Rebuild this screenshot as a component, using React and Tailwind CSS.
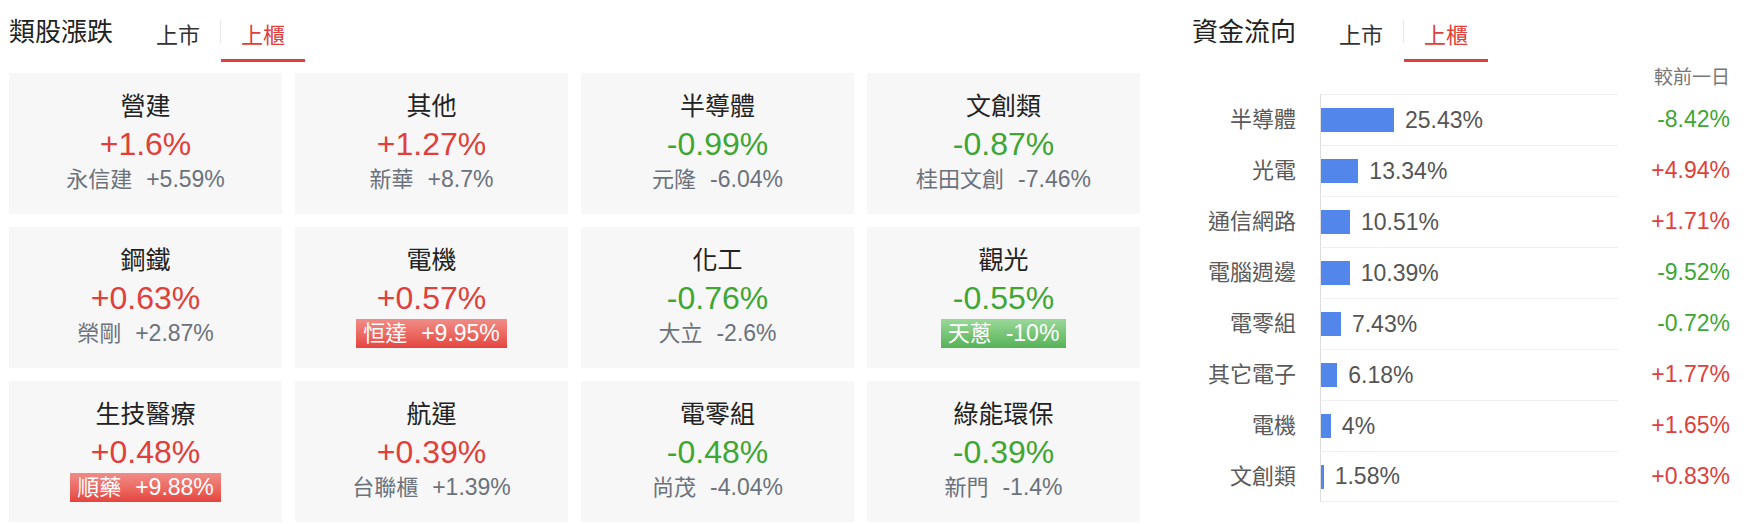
import React from "react";

const sectors = [
  { name: "營建", change: 1.6, top: "永信建", topChange: 5.59 },
  { name: "其他", change: 1.27, top: "新華", topChange: 8.7 },
  { name: "半導體", change: -0.99, top: "元隆", topChange: -6.04 },
  { name: "文創類", change: -0.87, top: "桂田文創", topChange: -7.46 },
  { name: "鋼鐵", change: 0.63, top: "榮剛", topChange: 2.87 },
  { name: "電機", change: 0.57, top: "恒達", topChange: 9.95, limit: true },
  { name: "化工", change: -0.76, top: "大立", topChange: -2.6 },
  { name: "觀光", change: -0.55, top: "天蔥", topChange: -10, limit: true },
  { name: "生技醫療", change: 0.48, top: "順藥", topChange: 9.88, limit: true },
  { name: "航運", change: 0.39, top: "台聯櫃", topChange: 1.39 },
  { name: "電零組", change: -0.48, top: "尚茂", topChange: -4.04 },
  { name: "綠能環保", change: -0.39, top: "新門", topChange: -1.4 },
];

const flows = [
  { name: "半導體", share: 25.43, diff: -8.42 },
  { name: "光電", share: 13.34, diff: 4.94 },
  { name: "通信網路", share: 10.51, diff: 1.71 },
  { name: "電腦週邊", share: 10.39, diff: -9.52 },
  { name: "電零組", share: 7.43, diff: -0.72 },
  { name: "其它電子", share: 6.18, diff: 1.77 },
  { name: "電機", share: 4, diff: 1.65 },
  { name: "文創類", share: 1.58, diff: 0.83 },
];

function signed(value) {
  return value > 0 ? `+${value}%` : `${value}%`;
}

function Tabs({ title }) {
  return (
    <div className="flex h-[62px]">
      <h2 className="pt-[14px] text-[26px] leading-[36px] text-[#222]">
        {title}
      </h2>
      <div className="ml-[23px] flex">
        <button className="h-[62px] border-b-[3px] border-transparent px-5 pt-[13px] text-[22px] leading-[32px] text-[#333]">
          上市
        </button>
        <span className="mt-[20px] h-[23px] w-px bg-[#e6e6e6]" />
        <button className="h-[62px] border-b-[3px] border-[#e0403b] px-5 pt-[13px] text-[22px] leading-[32px] text-[#e0403b]">
          上櫃
        </button>
      </div>
    </div>
  );
}

function SectorCard({ sector }) {
  const up = sector.change > 0;
  const topUp = sector.topChange > 0;

  let badge = "text-[#6b727c]";
  if (sector.limit) {
    badge = topUp
      ? "bg-linear-to-b from-[#f08c87] to-[#e5433e] px-[7px] text-white"
      : "bg-linear-to-b from-[#9ad89a] to-[#55b256] px-[7px] text-white";
  }

  return (
    <div className="flex h-[141px] flex-col items-center bg-[#f7f7f7] pt-[15px]">
      <p className="text-[25px] leading-[36px] text-[#222]">{sector.name}</p>
      <p
        className={`text-[32px] leading-[40px] ${
          up ? "text-[#e0403b]" : "text-[#3fa634]"
        }`}
      >
        {signed(sector.change)}
      </p>
      <div className="flex h-[31px] items-center">
        <span className={`flex h-[29px] items-center ${badge}`}>
          <span className="text-[22px]">{sector.top}</span>
          <span className="ml-[14px] text-[23px]">
            {signed(sector.topChange)}
          </span>
        </span>
      </div>
    </div>
  );
}

function FlowRow({ flow, last }) {
  const barWidth = Math.max(2, flow.share * 2.948 - 1.96);

  return (
    <div className="flex h-[51px] items-stretch">
      <div className="flex w-[104px] items-center justify-end text-[22px] text-[#5a5a5a]">
        {flow.name}
      </div>
      <div
        className={`ml-[24px] flex w-[298px] items-center border-l border-t border-l-[#dcdcdc] border-t-[#efefef] ${
          last ? "border-b border-b-[#efefef]" : ""
        }`}
      >
        <div
          className="h-[24px] bg-[#5386ea]"
          style={{ width: `${barWidth}px` }}
        />
        <span className="ml-[11px] text-[23px] text-[#555]">
          {flow.share}%
        </span>
      </div>
      <div
        className={`flex w-[112px] items-center justify-end text-[23px] ${
          flow.diff > 0 ? "text-[#e0403b]" : "text-[#3fa634]"
        }`}
      >
        {signed(flow.diff)}
      </div>
    </div>
  );
}

export default function App() {
  return (
    <div className="flex bg-white pl-[9px] font-[family-name:'Liberation_Sans','Noto_Sans_CJK_TC',sans-serif]">
      <section className="w-[1131px]">
        <Tabs title="類股漲跌" />
        <div className="mt-[11px] grid grid-cols-[repeat(4,273px)] gap-[13px]">
          {sectors.map((sector) => (
            <SectorCard key={sector.name} sector={sector} />
          ))}
        </div>
      </section>

      <section className="ml-[52px] w-[538px]">
        <Tabs title="資金流向" />
        <div className="flex h-[32px] items-center justify-end text-[19px] text-[#777]">
          較前一日
        </div>
        {flows.map((flow, i) => (
          <FlowRow
            key={flow.name}
            flow={flow}
            last={i === flows.length - 1}
          />
        ))}
      </section>
    </div>
  );
}
